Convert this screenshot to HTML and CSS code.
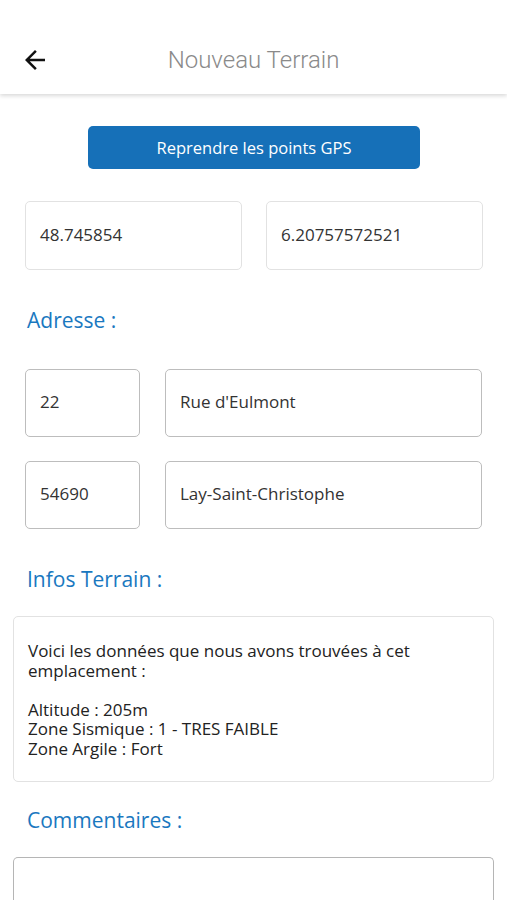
FILE: index.html
```html
<!DOCTYPE html>
<html lang="fr">
<head>
  <meta charset="UTF-8" />
  <meta name="viewport" content="width=device-width, initial-scale=1.0"/>
  <title>Nouveau Terrain</title>
  <link rel="stylesheet" href="styles.css">
</head>
<body>
  <header class="topbar">
    <button class="back" aria-label="Retour">
      <svg width="30" height="30" viewBox="0 0 24 24"><path d="M20 11H7.83l5.59-5.59L12 4l-8 8 8 8 1.41-1.41L7.83 13H20v-2z" fill="#111"/></svg>
    </button>
    <h1 class="title">Nouveau Terrain</h1>
  </header>

  <main class="content">
    <div class="gps-row">
      <button class="gps-btn">Reprendre les points GPS</button>
    </div>

    <!-- Coordonnées -->
    <div class="coords">
      <div class="field light">48.745854</div>
      <div class="field light">6.20757572521</div>
    </div>

    <h2 class="section">Adresse :</h2>
    <div class="addr-row">
      <div class="field">22</div>
      <div class="field">Rue d'Eulmont</div>
    </div>
    <div class="addr-row">
      <div class="field">54690</div>
      <div class="field">Lay-Saint-Christophe</div>
    </div>

    <h2 class="section">Infos Terrain :</h2>
    <div class="info-box">
      <p>Voici les données que nous avons trouvées à cet emplacement :</p>
      <p>Altitude : 205m<br>Zone Sismique : 1 - TRES FAIBLE<br>Zone Argile : Fort</p>
    </div>

    <h2 class="section comments">Commentaires :</h2>
    <div class="comment-box"></div>
  </main>
</body>
</html>
```

FILE: styles.css
```css
body {
  margin: 0;
  font-family: "Open Sans", "Noto Sans", sans-serif;
  background-color: #fff;
  color: #333;
}

.topbar {
  height: 94px;
  display: flex;
  align-items: center;
  padding-top: 26px;
  box-sizing: border-box;
  position: relative;
  box-shadow: 0 2px 4px rgba(0, 0, 0, 0.15);
}

.back {
  background: none;
  border: none;
  padding: 0;
  margin-left: 20px;
  width: 30px;
  height: 30px;
  cursor: pointer;
}

.title {
  position: absolute;
  top: 26px;
  bottom: 0;
  left: 0;
  right: 0;
  margin: 0;
  display: flex;
  align-items: center;
  justify-content: center;
  font-family: Roboto, "Liberation Sans", sans-serif;
  font-size: 24px;
  font-weight: 300;
  color: #8a8a8a;
  pointer-events: none;
}

.content {
  padding: 32px 13px 0 13px;
}

.gps-row {
  display: flex;
  justify-content: center;
}

.gps-btn {
  width: 332px;
  height: 43px;
  background-color: #1670b8;
  color: #fff;
  border: none;
  border-radius: 5px;
  font-family: inherit;
  font-size: 16.5px;
  margin-left: 1px;
}

.coords {
  display: grid;
  grid-template-columns: 1fr 1fr;
  gap: 24px;
  margin: 32px 11px 0 12px;
}

.field {
  height: 68px;
  box-sizing: border-box;
  border: 1.5px solid #bdbdbd;
  border-radius: 5px;
  display: flex;
  align-items: center;
  padding: 0 0 3px 14px;
  font-size: 17px;
  color: #333;
}

.field.light {
  height: 69px;
  border: 1px solid #e2e2e2;
}

.section {
  margin: 38px 0 0 14px;
  font-size: 21px;
  line-height: 25px;
  font-weight: 400;
  color: #1a78bf;
}

.section.comments {
  margin-top: 26px;
}

.addr-row {
  display: grid;
  grid-template-columns: 115px 1fr;
  gap: 25px;
  margin: 36px 12px 0 12px;
}

.addr-row + .addr-row {
  margin-top: 24px;
}

.info-box {
  margin-top: 24px;
  border: 1px solid #e2e2e2;
  border-radius: 5px;
  padding: 24px 14px 24px 14px;
  font-size: 17px;
  line-height: 19.5px;
  color: #222;
  height: 166px;
  box-sizing: border-box;
}

.info-box p {
  margin: 0 0 19.5px 0;
}

.info-box p:last-child {
  margin-bottom: 0;
}

.comment-box {
  margin-top: 24px;
  height: 80px;
  border: 1.5px solid #b5b5b5;
  border-bottom: none;
  border-radius: 5px 5px 0 0;
}
```
